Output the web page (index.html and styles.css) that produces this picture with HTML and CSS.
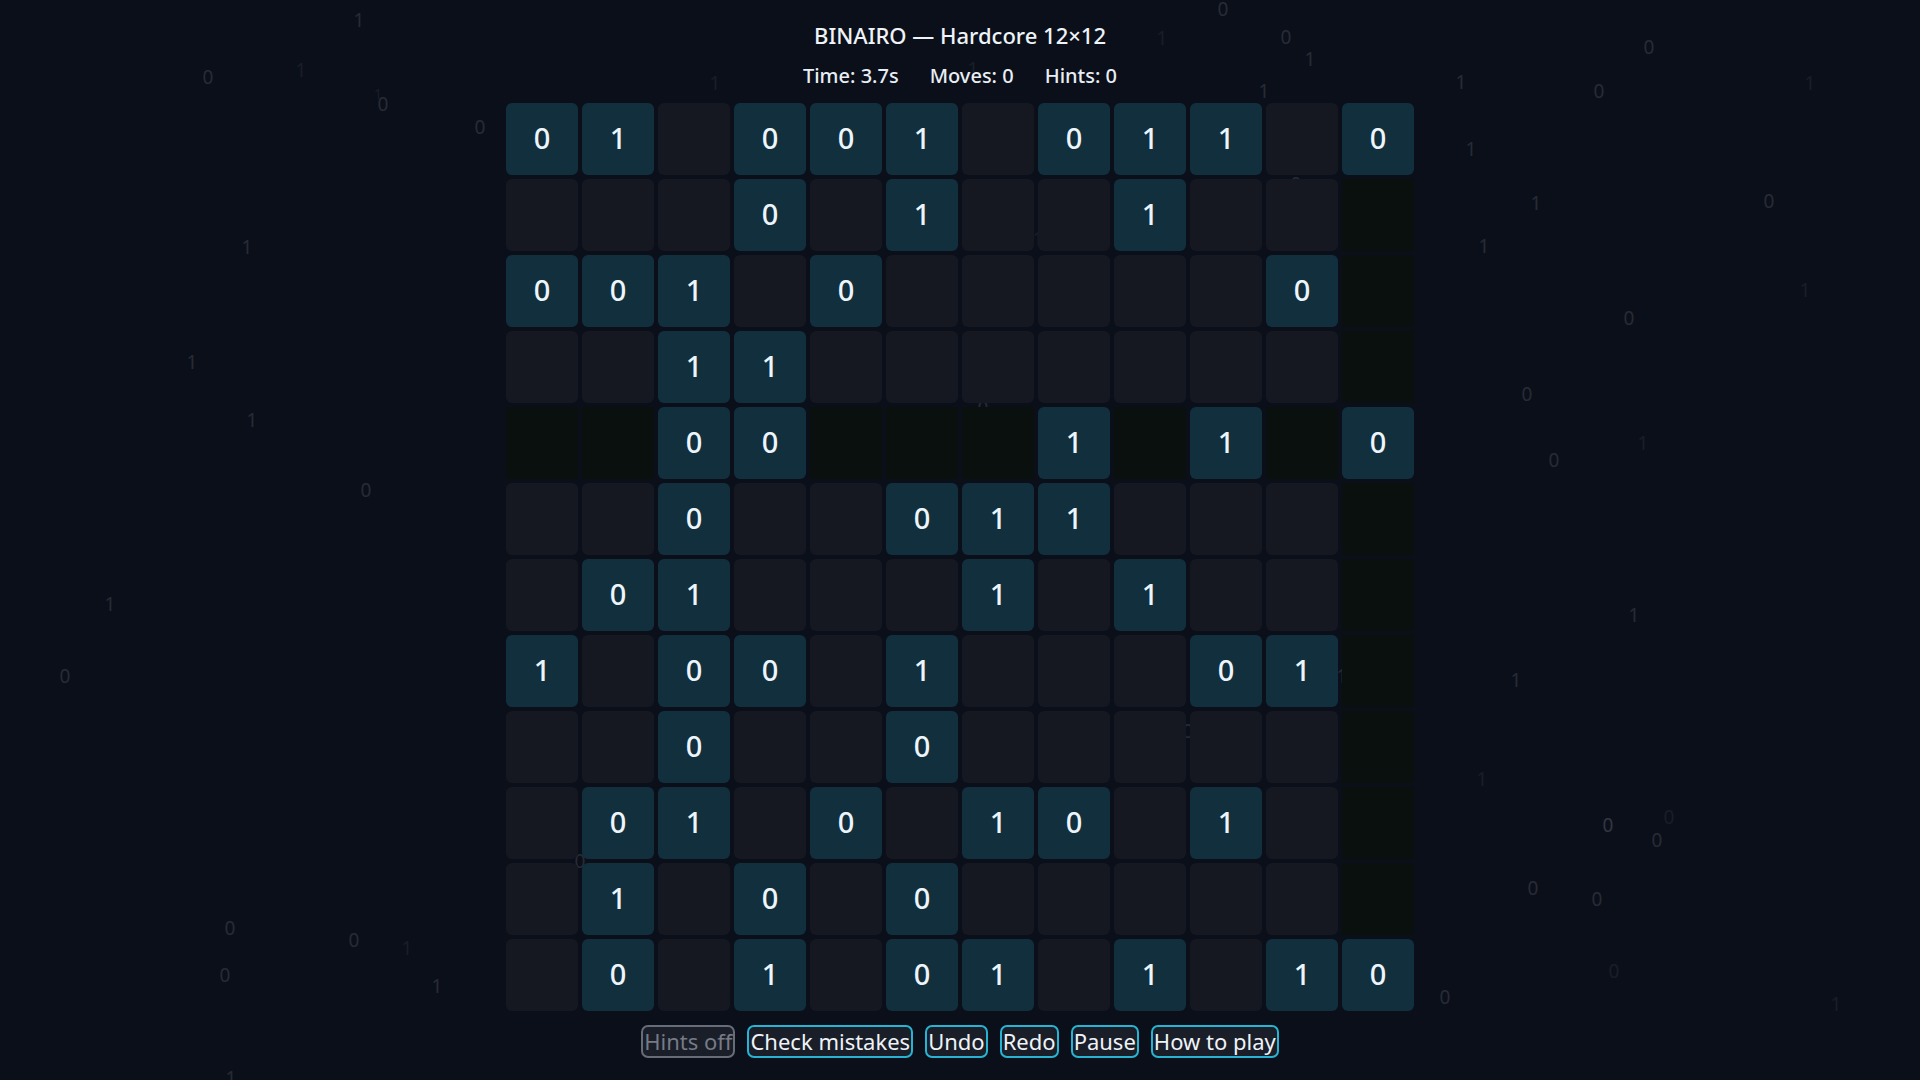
FILE: index.html
```html
<!DOCTYPE html>
<html lang="en">
<head>
<meta charset="utf-8">
<title>BINAIRO — Hardcore 12×12</title>
<link rel="stylesheet" href="styles.css">
</head>
<body>
<div class="rain" aria-hidden="true">
  <span class="bit m" style="left:359px;top:20px">1</span>
  <span class="bit m" style="left:208px;top:77px">0</span>
  <span class="bit f" style="left:301px;top:70px">1</span>
  <span class="bit f sm" style="left:378px;top:94px">1</span>
  <span class="bit m" style="left:383px;top:104px">0</span>
  <span class="bit m" style="left:480px;top:127px">0</span>
  <span class="bit f" style="left:715px;top:83px">1</span>
  <span class="bit m" style="left:247px;top:247px">1</span>
  <span class="bit m" style="left:192px;top:362px">1</span>
  <span class="bit m" style="left:252px;top:420px">1</span>
  <span class="bit m" style="left:366px;top:490px">0</span>
  <span class="bit m" style="left:110px;top:604px">1</span>
  <span class="bit m" style="left:65px;top:676px">0</span>
  <span class="bit m" style="left:230px;top:928px">0</span>
  <span class="bit m" style="left:354px;top:940px">0</span>
  <span class="bit f" style="left:407px;top:948px">1</span>
  <span class="bit m" style="left:225px;top:975px">0</span>
  <span class="bit m" style="left:437px;top:986px">1</span>
  <span class="bit m" style="left:231px;top:1078px">1</span>
  <span class="bit m" style="left:1223px;top:9px">0</span>
  <span class="bit f" style="left:1162px;top:38px">1</span>
  <span class="bit m" style="left:1286px;top:37px">0</span>
  <span class="bit m" style="left:1310px;top:59px">1</span>
  <span class="bit m" style="left:1264px;top:91px">1</span>
  <span class="bit f" style="left:973px;top:69px">1</span>
  <span class="bit m" style="left:1649px;top:47px">0</span>
  <span class="bit m" style="left:1461px;top:82px">1</span>
  <span class="bit m" style="left:1599px;top:91px">0</span>
  <span class="bit f" style="left:1810px;top:83px">1</span>
  <span class="bit m" style="left:1471px;top:149px">1</span>
  <span class="bit m" style="left:1536px;top:203px">1</span>
  <span class="bit m" style="left:1769px;top:201px">0</span>
  <span class="bit m" style="left:1484px;top:246px">1</span>
  <span class="bit f" style="left:1805px;top:290px">1</span>
  <span class="bit m" style="left:1629px;top:318px">0</span>
  <span class="bit m" style="left:1527px;top:394px">0</span>
  <span class="bit f" style="left:1643px;top:443px">1</span>
  <span class="bit m" style="left:1554px;top:460px">0</span>
  <span class="bit m" style="left:1634px;top:615px">1</span>
  <span class="bit m" style="left:1516px;top:680px">1</span>
  <span class="bit f" style="left:1482px;top:779px">1</span>
  <span class="bit f" style="left:1669px;top:817px">0</span>
  <span class="bit b" style="left:1608px;top:825px">0</span>
  <span class="bit m" style="left:1657px;top:840px">0</span>
  <span class="bit m" style="left:1533px;top:888px">0</span>
  <span class="bit m" style="left:1597px;top:899px">0</span>
  <span class="bit f" style="left:1614px;top:971px">0</span>
  <span class="bit m" style="left:1445px;top:997px">0</span>
  <span class="bit f" style="left:1836px;top:1004px">1</span>
  <span class="bit m" style="left:983px;top:408px">0</span>
  <span class="bit m" style="left:1296px;top:184px">0</span>
  <span class="bit m" style="left:1342px;top:676px">1</span>
  <span class="bit m" style="left:1188px;top:731px">0</span>
  <span class="bit m" style="left:580px;top:861px">0</span>
  <span class="bit f" style="left:1038px;top:239px">1</span>
</div>

<main class="game">
  <h1 class="title">BINAIRO — Hardcore 12×12</h1>
  <div class="stats">
    <span>Time: 3.7s</span>
    <span>Moves: 0</span>
    <span>Hints: 0</span>
  </div>

  <div class="board">
    <!-- row 1 -->
    <div class="cell on">0</div><div class="cell on">1</div><div class="cell"></div><div class="cell on">0</div><div class="cell on">0</div><div class="cell on">1</div><div class="cell"></div><div class="cell on">0</div><div class="cell on">1</div><div class="cell on">1</div><div class="cell"></div><div class="cell on">0</div>
    <!-- row 2 -->
    <div class="cell"></div><div class="cell"></div><div class="cell"></div><div class="cell on">0</div><div class="cell"></div><div class="cell on">1</div><div class="cell"></div><div class="cell"></div><div class="cell on">1</div><div class="cell"></div><div class="cell"></div><div class="cell dim"></div>
    <!-- row 3 -->
    <div class="cell on">0</div><div class="cell on">0</div><div class="cell on">1</div><div class="cell"></div><div class="cell on">0</div><div class="cell"></div><div class="cell"></div><div class="cell"></div><div class="cell"></div><div class="cell"></div><div class="cell on">0</div><div class="cell dim"></div>
    <!-- row 4 -->
    <div class="cell"></div><div class="cell"></div><div class="cell on">1</div><div class="cell on">1</div><div class="cell"></div><div class="cell"></div><div class="cell"></div><div class="cell"></div><div class="cell"></div><div class="cell"></div><div class="cell"></div><div class="cell dim"></div>
    <!-- row 5 -->
    <div class="cell dim"></div><div class="cell dim"></div><div class="cell on">0</div><div class="cell on">0</div><div class="cell dim"></div><div class="cell dim"></div><div class="cell dim"></div><div class="cell on">1</div><div class="cell dim"></div><div class="cell on">1</div><div class="cell dim"></div><div class="cell on">0</div>
    <!-- row 6 -->
    <div class="cell"></div><div class="cell"></div><div class="cell on">0</div><div class="cell"></div><div class="cell"></div><div class="cell on">0</div><div class="cell on">1</div><div class="cell on">1</div><div class="cell"></div><div class="cell"></div><div class="cell"></div><div class="cell dim"></div>
    <!-- row 7 -->
    <div class="cell"></div><div class="cell on">0</div><div class="cell on">1</div><div class="cell"></div><div class="cell"></div><div class="cell"></div><div class="cell on">1</div><div class="cell"></div><div class="cell on">1</div><div class="cell"></div><div class="cell"></div><div class="cell dim"></div>
    <!-- row 8 -->
    <div class="cell on">1</div><div class="cell"></div><div class="cell on">0</div><div class="cell on">0</div><div class="cell"></div><div class="cell on">1</div><div class="cell"></div><div class="cell"></div><div class="cell"></div><div class="cell on">0</div><div class="cell on">1</div><div class="cell dim"></div>
    <!-- row 9 -->
    <div class="cell"></div><div class="cell"></div><div class="cell on">0</div><div class="cell"></div><div class="cell"></div><div class="cell on">0</div><div class="cell"></div><div class="cell"></div><div class="cell"></div><div class="cell"></div><div class="cell"></div><div class="cell dim"></div>
    <!-- row 10 -->
    <div class="cell"></div><div class="cell on">0</div><div class="cell on">1</div><div class="cell"></div><div class="cell on">0</div><div class="cell"></div><div class="cell on">1</div><div class="cell on">0</div><div class="cell"></div><div class="cell on">1</div><div class="cell"></div><div class="cell dim"></div>
    <!-- row 11 -->
    <div class="cell"></div><div class="cell on">1</div><div class="cell"></div><div class="cell on">0</div><div class="cell"></div><div class="cell on">0</div><div class="cell"></div><div class="cell"></div><div class="cell"></div><div class="cell"></div><div class="cell"></div><div class="cell dim"></div>
    <!-- row 12 -->
    <div class="cell"></div><div class="cell on">0</div><div class="cell"></div><div class="cell on">1</div><div class="cell"></div><div class="cell on">0</div><div class="cell on">1</div><div class="cell"></div><div class="cell on">1</div><div class="cell"></div><div class="cell on">1</div><div class="cell on">0</div>
  </div>

  <div class="controls">
    <button class="btn" disabled>Hints off</button>
    <button class="btn">Check mistakes</button>
    <button class="btn">Undo</button>
    <button class="btn">Redo</button>
    <button class="btn">Pause</button>
    <button class="btn">How to play</button>
  </div>
</main>
</body>
</html>
```

FILE: styles.css
```css
html, body {
  margin: 0;
  height: 100%;
}

body {
  background: #0b0f19;
  color: #eef3f8;
  font-family: "Noto Sans", "Open Sans", sans-serif;
  overflow: hidden;
  position: relative;
}

/* faint scattered binary digits behind the board */
.rain {
  position: absolute;
  inset: 0;
  pointer-events: none;
}

.bit {
  position: absolute;
  transform: translate(-50%, -50%);
  font-size: 19px;
  line-height: 1;
  color: #c8d2e0;
}

.bit.b { opacity: 0.2; }
.bit.m { opacity: 0.14; }
.bit.f { opacity: 0.07; }
.bit.sm { font-size: 14px; }

.game {
  position: relative;
  display: flex;
  flex-direction: column;
  align-items: center;
}

.title {
  margin: 0;
  padding-top: 20px;
  font-size: 22px;
  line-height: 30px;
  font-weight: 500;
  color: #eef3f8;
}

.stats {
  margin-top: 12px;
  display: flex;
  gap: 31px;
  font-size: 20px;
  line-height: 28px;
  font-weight: 500;
  color: #e8eef5;
}

.board {
  margin-top: 13px;
  display: grid;
  grid-template-columns: repeat(12, 72px);
  grid-auto-rows: 72px;
  gap: 4px;
}

.cell {
  box-sizing: border-box;
  padding-bottom: 3px;
  border-radius: 6px;
  background: #151821;
  display: flex;
  align-items: center;
  justify-content: center;
  font-size: 29px;
  font-weight: 500;
  color: #eef5fa;
}

.cell.on {
  background: #122f3e;
}

.cell.dim {
  background: #0a100e;
  border-radius: 0;
}

.controls {
  margin-top: 14px;
  display: flex;
  gap: 12px;
}

.btn {
  font-family: "Noto Sans", "Open Sans", sans-serif;
  font-size: 22px;
  line-height: 29px;
  padding: 0 1px;
  border: 2px solid #27b3d2;
  border-radius: 7px;
  background: #1a1e29;
  color: #eef3f8;
}

.btn:disabled {
  border-color: #676d78;
  color: #767b85;
}
```
